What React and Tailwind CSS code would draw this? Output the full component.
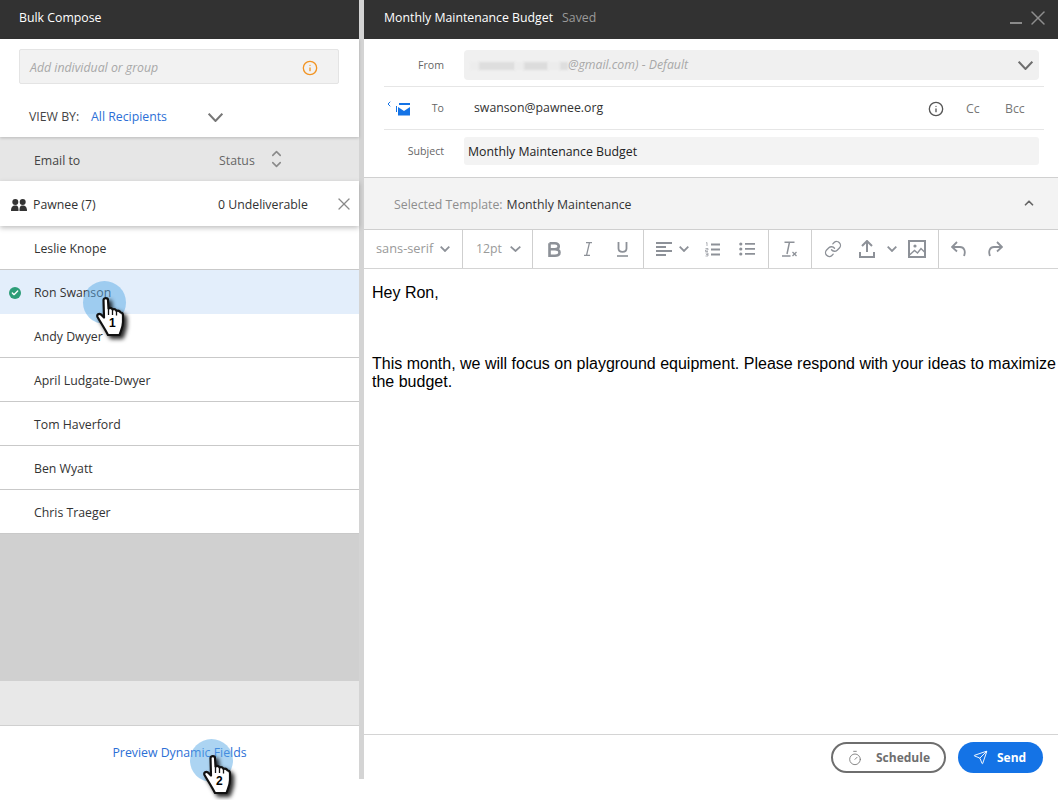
import React from "react";
import { ChevronUp, ChevronDown, ChevronLeft, X, Info, Link, Send, Timer, Check } from "lucide-react";

const recipients = [
  "Leslie Knope",
  "Ron Swanson",
  "Andy Dwyer",
  "April Ludgate-Dwyer",
  "Tom Haverford",
  "Ben Wyatt",
  "Chris Traeger",
];

const Chev = ({ w = 10, h = 6, sw = 1.800, className }) => (
  <svg className={className} width={w} height={h} viewBox={`0 0 ${w} ${h}`} fill="none" stroke="currentColor" strokeWidth={sw}>
    <path d={`M0.700 0.700L${w / 2} ${h - 1}L${w - 0.700} 0.700`} />
  </svg>
);

const HandCursor = ({ number, className }) => (
  <div className={className}>
    <div className="absolute left-0 top-0 w-[43px] h-[43px] rounded-full bg-[#5aa9e6]/50" />
    <svg className="absolute left-[13px] top-[16px] drop-shadow-[3px_3px_2px_rgba(0,0,0,0.85)]" width="30" height="40" viewBox="0 0 30 40">
      <path
        d="M7.500 3C7.500 .5 12 .5 12 3L12.500 11.500C14 10.500 16 11 16.500 12.500C18 11.500 20 12.500 20.500 14C22 13.200 24 14 24.500 15.500C26 15.500 27 16.500 27 18.500L27 25C27 30 25 33 23.500 38L12 38C9 32 5 26 1.500 20C.5 17.500 3 16 5 17.500L8 20.500Z"
        fill="#fff"
        stroke="#111"
        strokeWidth="2.200"
        strokeLinejoin="round"
      />
      <path d="M12.500 11.500V18M16.500 12.500V18M20.500 14V18.500" stroke="#111" strokeWidth="1.300" fill="none" />
    </svg>
    <span className="absolute left-[26px] top-[36px] text-[12px] leading-[13px] font-bold text-black font-['Liberation_Sans',sans-serif]">
      {number}
    </span>
  </div>
);

const ToolSep = () => <div className="w-px self-stretch bg-[#cfcfcf]" />;

const GroupIcon = () => (
  <svg className="ml-[11px] -mt-[2px] shrink-0" width="16" height="14" viewBox="0 0 16 14" fill="#333">
    <circle cx="4.300" cy="4" r="3" />
    <circle cx="11.700" cy="4" r="3" />
    <path d="M0 13c0-4 1.500-5.500 4.300-5.500S7.500 9 7.500 13Z" />
    <path d="M8.500 13c0-4 .5-5.500 3.200-5.500S16 9 16 13Z" />
  </svg>
);

export default function App() {
  return (
    <div className="relative w-[1058px] h-[800px] overflow-hidden bg-white flex font-['Open_Sans',sans-serif] text-[12.300px] text-[#333]">
      {/* Left column */}
      <div className="w-[359px] h-[779px] flex flex-col shrink-0 bg-[#e8e8e8]">
        <div className="h-[39px] bg-[#323232] text-white flex items-center pl-[19px] pb-[3px]">Bulk Compose</div>
        <div className="h-[98px] bg-white pt-[10px] relative z-20 shadow-[0_1px_3px_rgba(0,0,0,0.2)]">
          <div className="mx-[19px] w-[320px] h-[35px] bg-[#f2f2f2] border border-[#e4e4e4] rounded-[2px] flex items-center justify-between pl-[10px] pr-[20px] pt-[3px]">
            <span className="italic text-[#a8a8a8]">Add individual or group</span>
            <Info size={16} className="text-[#f29423]" strokeWidth={2} />
          </div>
          <div className="flex items-center pl-[29px] mt-[24px] h-[18px]">
            <span className="text-[#444] w-[52px]">VIEW BY:</span>
            <span className="ml-[10px] w-[77px] whitespace-nowrap text-[#2c6fd6]">All Recipients</span>
            <Chev w={15} h={9} sw={2} className="ml-[40px] mt-[1px] text-[#777]" />
          </div>
        </div>
        <div className="h-[44px] bg-[#e6e6e6] flex items-center pt-[5px] text-[#444]">
          <span className="ml-[34px] w-[185px]">Email to</span>
          <span className="text-[#666]">Status</span>
          <span className="ml-[14px] flex flex-col text-[#8a8a8a] -mt-[5px]">
            <ChevronUp size={15} strokeWidth={2.500} className="-mb-[4px]" />
            <ChevronDown size={15} strokeWidth={2.500} />
          </span>
        </div>
        <div className="h-[45px] bg-white flex items-center pt-[4px] relative z-10 shadow-[0_2px_5px_rgba(0,0,0,0.25)]">
          <GroupIcon />
          <span className="ml-[6px] w-[185px]">Pawnee (7)</span>
          <span>0 Undeliverable</span>
          <X size={20} className="ml-[26px] -mt-[4px] text-[#8a8a8a]" strokeWidth={1.500} />
        </div>
        {recipients.map((name) => (
          <div
            key={name}
            className={
              name === "Ron Swanson"
                ? "h-[44px] bg-[#e3eefb] flex items-center pt-[4px] border-b border-[#e3eefb] relative"
                : "h-[44px] bg-white flex items-center pt-[4px] border-b border-[#c9c9c9] relative"
            }
          >
            {name === "Ron Swanson" && (
              <span className="absolute left-[9px] top-[17px] w-[12px] h-[12px] rounded-full bg-[#2d9d78] flex items-center justify-center">
                <Check size={8} strokeWidth={4} className="text-white" />
              </span>
            )}
            <span className="ml-[34px]">{name}</span>
          </div>
        ))}
        <div className="h-[147px] bg-[#d0d0d0]" />
        <div className="h-[45px] bg-[#e8e8e8] border-b border-[#d0d0d0]" />
        <div className="flex-1 bg-white flex items-center justify-center pt-[2px] text-[#2c6fd6]">
          <span>Preview Dynamic Fields</span>
        </div>
      </div>

      {/* Gutter */}
      <div className="w-[5px] h-[779px] bg-[#d4d4d4] shrink-0" />

      {/* Right column */}
      <div className="flex-1 flex flex-col min-w-0 h-[800px]">
        <div className="h-[39px] bg-[#323232] flex items-center pl-[20px] pr-[8px] pb-[3px]">
          <span className="text-white">Monthly Maintenance Budget</span>
          <span className="ml-[9px] text-[#9a9a9a]">Saved</span>
          <span className="ml-auto w-[12px] h-[2px] bg-[#8a8a8a] mt-[10px]" />
          <X size={24} className="ml-[4px] text-[#8e8e8e]" strokeWidth={1.500} />
        </div>

        <div className="h-[139px] bg-white border-b border-[#d0d0d0] pl-[20px] pr-[14px] shrink-0">
          <div className="h-[48px] border-b border-[#e6e6e6] flex pt-[11px]">
            <span className="w-[60px] text-right text-[10.600px] text-[#666] leading-[30px]">From</span>
            <div className="ml-[20px] flex-1 mr-[5px] h-[30px] rounded-[4px] bg-[#f0f0f0] flex items-center relative pt-[1px]">
              <span className="ml-[6px] w-[9px] h-[8px] bg-[#ededed] blur-[1px]" />
              <span className="w-[36px] h-[8px] bg-[#dedede] blur-[1px]" />
              <span className="w-[9px] h-[8px] bg-[#ececec] blur-[1px]" />
              <span className="w-[24px] h-[8px] bg-[#dcdcdc] blur-[1px]" />
              <span className="w-[12px] h-[8px] bg-[#ececec] blur-[1px]" />
              <span className="w-[8px] h-[8px] bg-[#dedede] blur-[1px]" />
              <span className="italic text-[#a8a8a8]">@gmail.com) - Default</span>
              <Chev w={15} h={9} sw={2} className="absolute right-[6px] top-[11px] text-[#6e6e6e]" />
            </div>
          </div>
          <div className="h-[43px] border-b border-[#e6e6e6] flex items-center pt-[1px] relative">
            <ChevronLeft size={8} className="absolute left-[1px] top-[13px] text-[#1473e6]" strokeWidth={3} />
            <svg className="absolute left-[11px] top-[15px]" width="16" height="15" viewBox="0 0 16 15">
              <path d="M1 4v6h1V4Z" fill="#1473e6" />
              <path d="M4 1h11v2H4Z" fill="#1473e6" />
              <path d="M3 5l6 4 6-4v8.500H3Z" fill="#1473e6" />
            </svg>
            <span className="w-[60px] text-right text-[10.600px] text-[#666]">To</span>
            <span className="ml-[30px] text-[#333]">swanson@pawnee.org</span>
            <Info size={16} className="absolute left-[544px] top-[14px] text-[#555]" strokeWidth={2} />
            <span className="absolute left-[582px] top-[13px] text-[#777]">Cc</span>
            <span className="absolute left-[621px] top-[13px] text-[#777]">Bcc</span>
          </div>
          <div className="flex pt-[7px]">
            <span className="w-[60px] text-right text-[10.600px] text-[#666] leading-[29px]">Subject</span>
            <div className="ml-[20px] flex-1 mr-[5px] h-[28px] rounded-[3px] bg-[#f3f3f3] flex items-center pt-[3px] pl-[4px] text-[#222]">
              Monthly Maintenance Budget
            </div>
          </div>
        </div>

        <div className="h-[52px] bg-[#f3f3f3] border-b border-[#cfcfcf] flex items-center pt-[3px] pl-[30px] pr-[22px] shrink-0">
          <span className="text-[#8e8e8e]">Selected Template:</span>
          <span className="ml-[4px] text-[#333]">Monthly Maintenance</span>
          <ChevronUp size={14} strokeWidth={3} className="ml-auto -mt-[5px] text-[#666]" />
        </div>

        <div className="h-[39px] bg-white border-b border-[#d4d4d4] flex items-center text-[#8d9198] shrink-0">
          <div className="w-[98px] flex items-center pl-[12px]">
            <span className="text-[12.800px] text-[#9a9a9a]">sans-serif</span>
            <Chev className="ml-[7px]" />
          </div>
          <ToolSep />
          <div className="w-[69px] flex items-center pl-[13px]">
            <span className="text-[#9a9a9a]">12pt</span>
            <Chev w={11} className="ml-[8px]" />
          </div>
          <ToolSep />
          <div className="w-[110px] flex items-center pl-[15px]">
            <svg width="13" height="15" viewBox="0 0 13 15" fill="none" stroke="currentColor" strokeWidth="2.600">
              <path d="M1.500 1.300h5.500c5 0 5 6 0 6H1.500M7 7.300c6 0 6 6.400 0 6.400H1.500V1.300" />
            </svg>
            <svg className="ml-[23px]" width="8" height="14" viewBox="0 0 8 14" fill="none" stroke="currentColor" strokeWidth="1.300">
              <path d="M2 .7h6M0 13.300h6M5.500 .7L2.500 13.300" />
            </svg>
            <svg className="ml-[25px]" width="11" height="15" viewBox="0 0 11 15" fill="none" stroke="currentColor" strokeWidth="1.800">
              <path d="M1.500 0v6.500c0 4.500 8 4.500 8 0V0" />
              <path d="M0 14h11" strokeWidth="1.600" />
            </svg>
          </div>
          <ToolSep />
          <div className="w-[124px] flex items-center pl-[12px]">
            <svg width="16" height="14" viewBox="0 0 16 14" stroke="currentColor" strokeWidth="2">
              <path d="M0 1h16M0 5h10M0 9h16M0 13h10" />
            </svg>
            <Chev className="ml-[7px]" />
            <svg className="ml-[16px]" width="15" height="15" viewBox="0 0 15 15" stroke="currentColor">
              <path d="M6 2.500h9M6 7.500h9M6 12.500h9" strokeWidth="1.800" />
              <path d="M1 1l1-.5V4M.5 6.500h2.500V8H.5v1.500H3M.5 11H3v3H.5M1 12.500h2" strokeWidth=".7" fill="none" />
            </svg>
            <svg className="ml-[19px]" width="16" height="14" viewBox="0 0 16 14" fill="currentColor">
              <circle cx="1.800" cy="2" r="1.600" />
              <circle cx="1.800" cy="7" r="1.600" />
              <circle cx="1.800" cy="12" r="1.600" />
              <path d="M6 1h10v1.800H6ZM6 6h10v1.800H6ZM6 11h10v1.800H6Z" />
            </svg>
          </div>
          <ToolSep />
          <div className="w-[42px] flex items-center pl-[13px]">
            <svg width="16" height="16" viewBox="0 0 16 16" fill="none" stroke="currentColor">
              <path d="M2.500 1.200h10M7.500 1.200L5 13" strokeWidth="1.500" />
              <path d="M0 15h8.500" strokeWidth="1.500" />
              <path d="M10.500 11l4 4M14.500 11l-4 4" strokeWidth="1.300" />
            </svg>
          </div>
          <ToolSep />
          <div className="w-[126px] flex items-center pl-[12px]">
            <Link size={18} strokeWidth={1.800} />
            <svg className="ml-[17px]" width="16" height="18" viewBox="0 0 16 18" fill="none" stroke="currentColor" strokeWidth="2">
              <path d="M3 6l5-5 5 5M8 1.500V12M1 12v5h14v-5" />
            </svg>
            <Chev className="ml-[12px]" />
            <svg className="ml-[11px]" width="18" height="18" viewBox="0 0 18 18" fill="none" stroke="currentColor">
              <rect x="1" y="1" width="16" height="16" strokeWidth="2" />
              <circle cx="7" cy="6" r="1.600" fill="currentColor" stroke="none" />
              <path d="M1.500 15l5-4.500 3 2.500 3.500-4.500 4 4" strokeWidth="1.400" />
            </svg>
          </div>
          <ToolSep />
          <div className="flex items-center pl-[12px]">
            <svg width="15" height="16" viewBox="0 0 15 16" fill="none" stroke="currentColor" strokeWidth="1.800">
              <path d="M6 1L1 6l5 4.500M1 6h8c4 0 6 4 4 9" />
            </svg>
            <svg className="ml-[21px]" width="16" height="16" viewBox="0 0 16 16" fill="none" stroke="currentColor" strokeWidth="1.800">
              <path d="M10 1l5 5-5 4.500M15 6H7c-4 0-6 4-4 9" />
            </svg>
          </div>
        </div>

        <div className="flex-1 bg-white pl-[8px] pt-[15px] font-['Liberation_Sans',sans-serif] text-[16px] leading-[18px] text-black">
          <p>Hey Ron,</p>
          <p className="mt-[53px]">
            This month, we will focus on playground equipment. Please respond with your ideas to maximize the budget.
          </p>
        </div>

        <div className="h-[66px] shrink-0 border-t border-[#d4d4d4] flex justify-end pt-[7px] pr-[15px] bg-white text-[12px]">
          <button className="w-[115px] h-[31px] rounded-full border-2 border-[#6e6e6e] flex items-center pl-[14px] text-[#6e6e6e] font-bold">
            <Timer size={16} strokeWidth={1.300} className="text-[#777]" />
            <span className="ml-[13px]">Schedule</span>
          </button>
          <button className="ml-[12px] w-[85px] h-[31px] rounded-full bg-[#1473e6] flex items-center pl-[15px] text-white font-bold">
            <Send size={15} strokeWidth={1.500} />
            <span className="ml-[9px]">Send</span>
          </button>
        </div>
      </div>

      <HandCursor number="1" className="absolute left-[83px] top-[281px] w-[43px] h-[60px]" />
      <HandCursor number="2" className="absolute left-[190px] top-[739px] w-[43px] h-[60px]" />
    </div>
  );
}
